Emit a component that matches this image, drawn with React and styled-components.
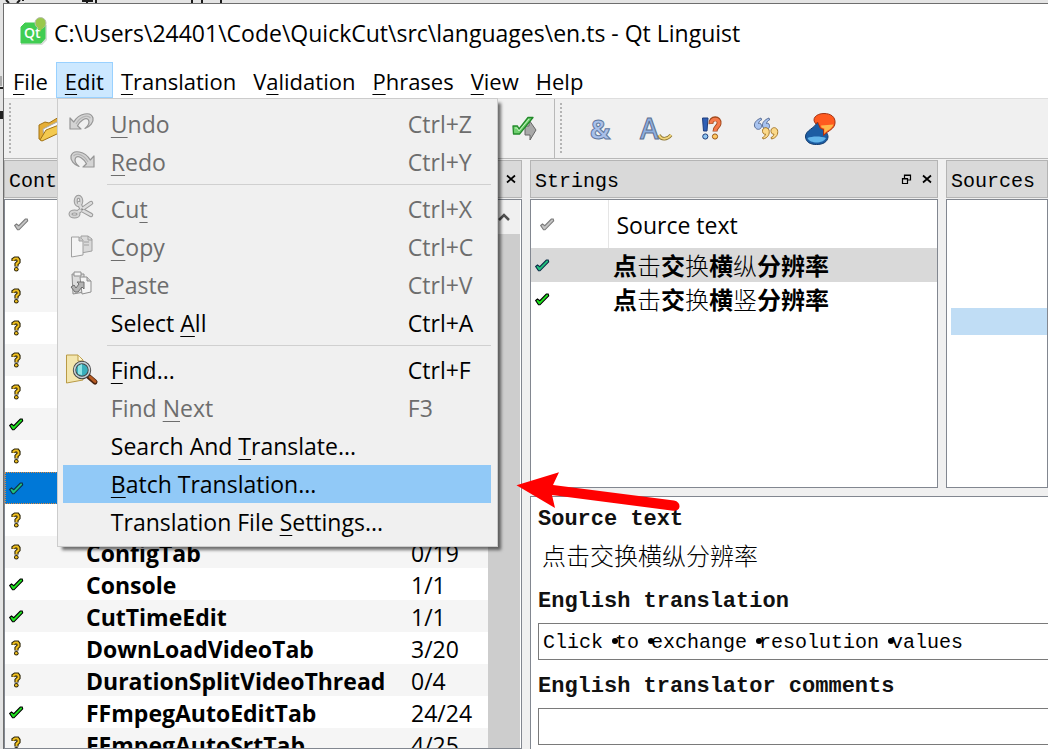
import React from "react";
import styled, { createGlobalStyle, css } from "styled-components";

const ui = '"Open Sans", "Noto Sans", sans-serif';
const mono = '"Liberation Mono", "Noto Sans CJK SC", monospace';
const cjk = '"Noto Sans CJK SC", sans-serif';

const GlobalStyle = createGlobalStyle`
  *, *::before, *::after { box-sizing: border-box; }
  body { margin: 0; font: 23px/32px ${ui}; color: #000; background: #e4e4e4; }
  button { font: inherit; color: inherit; background: none; border: 0; padding: 0; text-align: left; }
  table { border-collapse: collapse; border-spacing: 0; }
  svg { display: block; flex: none; overflow: visible; }
`;

const Desktop = styled.div`
  position: relative;
  height: 100vh;
  padding: 3px 0 0 3px;
  overflow: hidden;
`;
const Behind = styled.svg`
  position: absolute;
  left: 0;
  top: 0;
`;
const Window = styled.main`
  position: relative;
  height: 100%;
  display: flex;
  flex-direction: column;
  background: #f0f0f0;
  border: solid #6e6e6e;
  border-width: 1px 0 0 1px;
`;
const TitleBar = styled.header`
  display: flex;
  align-items: center;
  gap: 6px;
  height: 58px;
  flex: none;
  padding: 0 16px;
  background: #fff;
  white-space: nowrap;
`;
const MenuBar = styled.nav`
  display: flex;
  height: 37px;
  flex: none;
  background: #fff;
  border-bottom: 1px solid #dedede;
`;
const MenuSlot = styled.div`
  position: relative;
  margin-right: -1px;
`;
const MenuButton = styled.button`
  height: 36px;
  padding: 2px 8px 0;
  border: 1px solid ${(p) => (p.$open ? "#99d1ff" : "transparent")};
  background: ${(p) => (p.$open ? "#cce8ff" : "transparent")};
  font-size: 22px;
  white-space: nowrap;
`;
const Key = styled.span`
  text-decoration: underline;
  text-decoration-thickness: 1px;
  text-underline-offset: 4px;
`;
const Menu = styled.div`
  position: absolute;
  z-index: 2;
  top: 36px;
  left: 1px;
  width: 441px;
  padding: 6px 6px 5px 5px;
  background: #f0f0f0;
  border: 1px solid #ccc;
  box-shadow: 4px 4px 3px -1px rgba(0, 0, 0, 0.55);
`;
const MenuItem = styled.button`
  display: grid;
  grid-template-columns: 48px 1fr 83px;
  align-items: center;
  width: 100%;
  height: 38px;
  color: ${(p) => (p.disabled ? "#6d6d6d" : "#000")};
  background: ${(p) => (p.$active ? "#91c9f7" : "transparent")};
  white-space: nowrap;
`;
const MenuIcon = styled.span`
  padding-left: ${(p) => (p.$wide ? 2 : 5)}px;
`;
const Separator = styled.hr`
  height: 1px;
  margin: 3px 0 5px 44px;
  border: 0;
  background: #d0d0d0;
`;
const ToolRow = styled.div`
  display: flex;
  height: 60px;
  flex: none;
  border-bottom: 1px solid #b8b8b8;
`;
const Toolbar = styled.div`
  display: flex;
  align-items: center;
  padding: 0 15px 0 5px;
  ${(p) =>
    p.$main
      ? css`
          width: 551px;
          justify-content: space-between;
          border-right: 1px solid #b8b8b8;
        `
      : css`
          flex: 1;
          gap: 23px;
        `}
`;
const Grip = styled.span`
  width: 2px;
  height: 52px;
  background: repeating-linear-gradient(#b4b4b4 0 2px, transparent 2px 4px);
`;
const ToolButton = styled.button`
  width: 32px;
  height: 32px;
`;
const ToolGroup = styled.div`
  display: flex;
  flex: 1;
  justify-content: space-between;
  padding-left: 23px;
`;
const Workspace = styled.div`
  display: flex;
  gap: 8px;
  flex: 1;
  min-height: 0;
  padding-top: 1px;
`;
const Dock = styled.section`
  display: flex;
  flex-direction: column;
  gap: 1px;
  min-width: 0;
  min-height: 0;
  ${(p) => (p.$width ? `flex: 0 0 ${p.$width}px;` : "flex: 1;")}
`;
const DockTitle = styled.div`
  display: flex;
  align-items: center;
  justify-content: space-between;
  height: 38px;
  flex: none;
  padding: 2px 3px 0 4px;
  background: #d9d9d9;
  border: 1px solid #b4b4b4;
  font: 20px/32px ${mono};
  white-space: nowrap;
  overflow: hidden;
`;
const DockName = styled.span`
  padding-top: 3px;
`;
const DockButtons = styled.span`
  display: flex;
  gap: 7px;
`;
const DockButton = styled.button`
  padding-bottom: 3px;
`;
const Pane = styled.div`
  display: flex;
  flex: 1;
  min-height: 0;
  overflow: hidden;
  background: #fff;
  border: 1px solid #828790;
`;
const Right = styled.div`
  display: flex;
  flex-direction: column;
  flex: 1;
  gap: 8px;
  min-width: 0;
`;
const TopDocks = styled.div`
  display: flex;
  flex: none;
  gap: 8px;
  height: 328px;
`;
const Table = styled.table`
  flex: 1;
  align-self: flex-start;
  table-layout: fixed;
  width: 100%;
  th, td { padding: 0; text-align: left; white-space: nowrap; }
  th { font-weight: 400; height: 48px; }
`;
const HeadIcon = styled.th`
  svg { margin-left: 9px; }
`;
const HeadText = styled.th`
  border-left: 1px solid #e5e5e5;
`;
const HeadLabel = styled.div`
  padding: 2px 0 0 8px;
`;
const ContextRow = styled.tr`
  height: 32px;
  background: ${(p) => (p.$selected ? "#0078d7" : p.$alt ? "#f5f5f5" : "#fff")};
  outline: ${(p) => (p.$selected ? "1px dotted #e08a3c" : "none")};
  outline-offset: -1px;
  td { line-height: 30px; padding-top: 2px; }
  td:first-child { padding-top: 0; }
  svg { margin-left: 4px; }
`;
const Name = styled.td`
  font-weight: 700;
`;
const StringRow = styled.tr`
  height: 34px;
  background: ${(p) => (p.$selected ? "#d9d9d9" : "#fff")};
  svg { margin-left: 4px; }
`;
const StringText = styled.td`
  font: 24px/34px ${cjk};
`;
const StringLabel = styled.span`
  padding-left: 5px;
`;
const Heavy = styled.span`
  font-weight: 700;
`;
const Light = styled.span`
  font-weight: 300;
`;
const ScrollBar = styled.div`
  flex: none;
  width: 32px;
  margin-right: 1px;
  background: #cdcdcd;
`;
const ScrollUp = styled.button`
  display: grid;
  place-items: center;
  width: 32px;
  height: 34px;
  background: #f0f0f0;
`;
const SourceView = styled.div`
  flex: 1;
  padding: 108px 0 0 4px;
`;
const CurrentLine = styled.div`
  height: 27px;
  background: #c0ddf5;
`;
const Editor = styled.section`
  flex: 1;
  min-height: 0;
  padding: 8px 0 0 7px;
  background: #fff;
  border: solid #828790;
  border-width: 1px 0 0 1px;
`;
const Label = styled.label`
  display: block;
  padding-top: 2px;
  font: 700 22px/26px ${mono};
  color: #111;
`;
const SourceText = styled.p`
  margin: 4px 0 14px;
  padding-left: 4px;
  font: 300 24px/36px ${cjk};
`;
const Field = styled.div`
  position: relative;
  margin: 8px 0 12px;
`;
const Input = styled.input`
  display: block;
  width: 100%;
  height: 37px;
  padding: 2px 4px 0;
  border: 1px solid #7a7a7a;
  border-right: 0;
  border-radius: 0;
  outline: 0;
  background: #fff;
  font: 20px/32px ${mono};
`;
const SpaceMarks = styled.svg`
  position: absolute;
  left: 5px;
  top: 0;
  pointer-events: none;
`;
const Pointer = styled.svg`
  position: absolute;
  z-index: 3;
  left: 512px;
  top: 468px;
`;

const checkColors = {
  done: ["#1fe31f", "#000"],
  selected: ["#1fc07c", "#0c2f48"],
  off: ["#c4c4c4", "#7c7c7c"],
};
const Check = ({ kind = "done" }) => (
  <svg width="15" height="13" viewBox="0 0 15 13">
    <path d="M.7 7.500 2.500 6 4.800 7.700 11.300 1H13.200L13.700 2.800 5 11.800H3.500Z" fill={checkColors[kind][0]} stroke={checkColors[kind][1]} strokeWidth="1.100" />
  </svg>
);
const Question = () => (
  <svg width="15" height="16" viewBox="0 0 15 16" fill="none">
    <path d="M4.5 5V3.5L6 2.5H8.5L9.5 4V6L7.5 8V10.5" stroke="#2b2306" strokeWidth="4.2" />
    <circle cx="7.3" cy="13.3" r="2.3" fill="#2b2306" />
    <path d="M4.5 4.8V3.5L6 2.5H8.5L9.5 4V6L7.5 8V10" stroke="#f0c020" strokeWidth="2" />
    <circle cx="7.3" cy="13.2" r="1.3" fill="#f0c020" />
  </svg>
);
const QtLogo = () => (
  <svg width="28" height="28" viewBox="0 0 28 28">
    <path d="M5 6H27V21L22 26H1V10Z" fill="#b9c4bb" opacity=".6" />
    <path d="M5 4H25V19.500L21 24H1V8Z" fill="#41cd52" stroke="#41cd52" strokeLinejoin="round" />
    <text x="4" y="19" fill="#fff" fontFamily="Open Sans" fontWeight="600" fontSize="14">Qt</text>
    <circle cx="20.500" cy="4" r="5.500" fill="#99c84a" stroke="#b7bfae" />
    <path d="M17 7 20 12 25 7Z" fill="#99c84a" />
  </svg>
);
const Undo = ({ flip }) => (
  <svg width="28" height="28" viewBox="0 0 28 28">
    <g transform={flip ? "translate(28 0) scale(-1 1)" : undefined} fill="#d4d4d4" stroke="#969696" strokeWidth="1.2" strokeLinejoin="round">
      <path d="M2 8 2 19 13 19 9.500 15.800C11 12 18 6 20.500 10C22 13 20 16 17 18.500C22 17 26 12 25 8C23 1 11 3 5.800 12Z" />
      <path d="M8 14C12 7 19 4 22.500 8" fill="none" stroke="#b5b5b5" />
    </g>
  </svg>
);
const Cut = () => (
  <svg width="28" height="28" viewBox="0 0 28 28" fill="none" stroke="#999" strokeLinecap="round">
    <path d="M11 8 14 15 23 20M23 8 10 17" strokeWidth="4.500" />
    <ellipse cx="10.500" cy="6" rx="2.800" ry="4.200" strokeWidth="4" />
    <ellipse cx="6.500" cy="19" rx="4" ry="2.600" strokeWidth="4" />
    <path d="M11 8 14 15 23 20M23 8 10 17" strokeWidth="2.500" stroke="#ddd" />
    <ellipse cx="10.500" cy="6" rx="2.800" ry="4.200" strokeWidth="2" stroke="#d4d4d4" />
    <ellipse cx="6.500" cy="19" rx="4" ry="2.600" strokeWidth="2" stroke="#d4d4d4" />
    <circle cx="14" cy="14.500" r=".8" stroke="#888" />
  </svg>
);
const Copy = () => (
  <svg width="28" height="28" viewBox="0 0 28 28" fill="#ebebeb" stroke="#a0a0a0">
    <path d="M13 3H20L24 6V18L13 20Z" fill="#dadada" />
    <path d="M20 3V7H24M16 9H21M16 12H21" fill="none" />
    <path d="M3.500 4H11L15 7V22L3.500 24Z" fill="#f4f4f4" />
    <path d="M11 4V8H15" fill="#ccc" />
  </svg>
);
const Paste = () => (
  <svg width="28" height="28" viewBox="0 0 28 28" fill="#ddd" stroke="#8e8e8e">
    <path d="M4 3H16V21L5 23Z" />
    <path d="M6 1H13V5H6Z" fill="#f4f4f4" />
    <path d="M12 6H19L23 10V21L14 23Z" fill="#f4f4f4" />
    <path d="M19 6V10H23" fill="#ccc" />
    <path d="M3 16 6 14 8 17 11 13 9 11H16V18L14 16 10 21H7Z" fill="#b4b4b4" stroke="#6e6e6e" />
  </svg>
);
const Find = () => (
  <svg width="34" height="32" viewBox="0 0 34 32">
    <path d="M1.500 1H13L18 6V26L1.500 29Z" fill="#f3e6ae" stroke="#b99a45" />
    <path d="M13 1V7H18" fill="#fff7d4" stroke="#b99a45" />
    <path d="M23 22 30 28" stroke="#4c2410" strokeWidth="5" strokeLinecap="round" />
    <path d="M25 23 30 27.500" stroke="#b65b23" strokeWidth="3" strokeLinecap="round" />
    <circle cx="17" cy="16" r="7.500" fill="#39aebb" stroke="#444" strokeWidth="3.400" />
    <circle cx="17" cy="16" r="7.500" fill="none" stroke="#c5d3d8" strokeWidth="1.600" />
    <path d="M13 20V12L17 10V21Z" fill="#8ce3e3" />
  </svg>
);
const Folder = () => (
  <svg width="32" height="32" viewBox="0 0 32 32" stroke="#a37313">
    <path d="M5 12 11 9 15 10 25 4 29 6V14L8 27 5 26Z" fill="#e5ae37" />
    <path d="M9 16 27 7V13L10 25Z" fill="#fafafa" stroke="#aaa" />
    <path d="M6 27 12 17 30 10 25 20 8 28Z" fill="#f3c94f" />
  </svg>
);
const DoneNext = () => (
  <svg width="32" height="32" viewBox="0 0 32 32" strokeLinejoin="round">
    <path d="M22 7 29 17 23 27V22H18V13H22Z" fill="#a9a9a9" stroke="#666" />
    <path d="M6 13H10.500L12 16 21 4.500H26L12.500 21H6.500Z" fill="#6fd06f" stroke="#238a2b" strokeWidth="1.300" />
    <path d="M8 15H10L12 18 22 6" fill="none" stroke="#c5f3c0" />
  </svg>
);
const Ampersand = () => (
  <svg width="32" height="32" viewBox="0 0 32 32">
    <text x="5" y="26" fontFamily="Open Sans" fontWeight="700" fontSize="27" fill="#a9c0ea" stroke="#5f789f">&amp;</text>
  </svg>
);
const Accel = () => (
  <svg width="32" height="32" viewBox="0 0 32 32">
    <text x="0" y="26" fontFamily="Open Sans" fontWeight="600" fontSize="28" fill="#8fb0e0" stroke="#5d6f90">A</text>
    <path d="M19 22C21 27 27 27 31 22" fill="none" stroke="#8b7430" strokeWidth="3.500" />
    <path d="M19 22C21 27 27 27 31 22" fill="none" stroke="#f2d57c" strokeWidth="2" />
  </svg>
);
const Punct = () => (
  <svg width="32" height="32" viewBox="0 0 32 32">
    <path d="M7.500 5H13L12 18H8.500Z" fill="#2f5fb5" stroke="#1e3d7c" />
    <circle cx="10.300" cy="23.500" r="2.600" fill="#8ec4f0" stroke="#1e3d7c" />
    <path d="M16 11C15.500 4 25 4 24 10.500C23.500 14 20 14 20 18.500" fill="none" stroke="#a24a1d" strokeWidth="5" />
    <path d="M16 10.500C15.500 5 25 5 24 10.500C23.500 14 20 14 20 18" fill="none" stroke="#f5794a" strokeWidth="3.200" />
    <circle cx="20" cy="23.500" r="2.600" fill="#ffc862" stroke="#9a5a17" />
  </svg>
);
const Quotes = () => (
  <svg width="32" height="32" viewBox="0 0 32 32">
    <g fill="#a8c3ef" stroke="#5a6f98">
      <path d="M11 5C6 7 4 10 4.500 13C6 18 12 17 11.500 12.500C11 10 9.500 10 8.500 10.500C8.500 9 10 7.500 11.500 7Z" />
      <path d="M19 5C14 7 12 10 12.500 13C14 18 20 17 19.500 12.500C19 10 17.500 10 16.500 10.500C16.500 9 18 7.500 19.500 7Z" />
    </g>
    <g fill="#fbd98a" stroke="#a87a2b">
      <path d="M13 26C18 25 20 21 19 17C17 13 12 14.500 12.500 18.500C13 21 14.500 21.500 15.500 21C15 23 14 24 12.500 24.500Z" />
      <path d="M21.500 26C26.500 25 28.500 21 27.500 17C25.500 13 20.500 14.500 21 18.500C21.500 21 23 21.500 24 21C23.500 23 22.500 24 21 24.500Z" />
    </g>
  </svg>
);
const Placeholders = () => (
  <svg width="32" height="32" viewBox="0 0 32 32" strokeLinejoin="round">
    <path d="M12 9C11 15 0 17 .5 24C1 29 5 31.500 11.500 31.500C18 31.500 22.500 29 23 24C23 20 20 18 17 15Z" fill="#1c5da3" stroke="#123a6b" />
    <path d="M2.500 25C5 31 18 31 21 25C16 23 7 23 2.500 25Z" fill="#62b5ea" />
    <path d="M11 11C6 6 11 .5 19 .5C26 .5 30.500 4 30 10C29.500 16 24 17 18.500 22.500V16.500L15.500 15.500 12.500 9Z" fill="#ff5a1f" stroke="#a33313" />
    <path d="M16 12.500 28.500 11.500C27 16 22.500 17 19.300 20.500V15.500L16.500 14.500Z" fill="#ffb84a" />
  </svg>
);
const Close = () => (
  <svg width="14" height="14" viewBox="0 0 14 14">
    <path d="M3 3.500 11 10.500M11 3.500 3 10.500" stroke="#000" strokeWidth="1.700" />
  </svg>
);
const Float = () => (
  <svg width="14" height="14" viewBox="0 0 14 14" fill="none" stroke="#000">
    <path d="M5.500 6V3H11.500V8H8.500M5 3.500H12M3.500 6.500H8.500V11.500H3.500ZM3 7H9" strokeWidth="1.200" />
  </svg>
);

const menuIcons = { undo: <Undo />, redo: <Undo flip />, cut: <Cut />, copy: <Copy />, paste: <Paste />, find: <Find /> };
const editMenu = [
  ["undo", "_Undo", "Ctrl+Z", "off"],
  ["redo", "_Redo", "Ctrl+Y", "off"],
  null,
  ["cut", "Cu_t", "Ctrl+X", "off"],
  ["copy", "_Copy", "Ctrl+C", "off"],
  ["paste", "_Paste", "Ctrl+V", "off"],
  ["", "Select _All", "Ctrl+A"],
  null,
  ["find", "_Find...", "Ctrl+F"],
  ["", "Find _Next", "F3", "off"],
  ["", "Search And _Translate..."],
  ["", "_Batch Translation...", "", "active"],
  ["", "Translation File _Settings..."],
];
const contexts = [
  ["?"], ["?"], ["?"], ["?"], ["?"], ["done"], ["?"], ["selected"], ["?"],
  ["?", "ConfigTab", "0/19"],
  ["done", "Console", "1/1"],
  ["done", "CutTimeEdit", "1/1"],
  ["?", "DownLoadVideoTab", "3/20"],
  ["?", "DurationSplitVideoThread", "0/4"],
  ["done", "FFmpegAutoEditTab", "24/24"],
  ["?", "FFmpegAutoSrtTab", "4/25"],
];
const thin = "击换纵竖";
const translation = "Click to exchange resolution values";

function Mnemonic({ text }) {
  const i = text.indexOf("_");
  return (
    <span>
      {text.slice(0, i)}
      <Key>{text[i + 1]}</Key>
      {text.slice(i + 2)}
    </span>
  );
}

function EditMenu() {
  return (
    <Menu role="menu">
      {editMenu.map((item, i) =>
        item ? (
          <MenuItem key={i} role="menuitem" disabled={item[3] === "off"} $active={item[3] === "active"}>
            <MenuIcon $wide={item[0] === "find"}>{menuIcons[item[0]]}</MenuIcon>
            <Mnemonic text={item[1]} />
            <span>{item[2]}</span>
          </MenuItem>
        ) : (
          <Separator key={i} />
        )
      )}
    </Menu>
  );
}

function MixedText({ text }) {
  return (
    <StringLabel>
      {[...text].map((c, i) => (thin.includes(c) ? <Light key={i}>{c}</Light> : <Heavy key={i}>{c}</Heavy>))}
    </StringLabel>
  );
}

export default function App() {
  return (
    <Desktop>
      <GlobalStyle />
      <Behind width="240" height="130" viewBox="0 0 240 130" aria-hidden="true">
        <path d="M6 0 9 3M20 0 17 3M22 0H24M82 1H93M87 0V3M96 0V3M192 0V3M202 0V3M221 0V3" stroke="#1a1a1a" strokeWidth="2" />
        <path d="M0 76H2V86H0Z" fill="#aaa" />
        <path d="M0 87H3V89H0ZM0 111H4V119H0Z" fill="#222" />
      </Behind>
      <Window>
        <TitleBar>
          <QtLogo />
          <span>C:\Users\24401\Code\QuickCut\src\languages\en.ts - Qt Linguist</span>
        </TitleBar>
        <MenuBar>
          {["_File", "_Edit", "_Translation", "V_alidation", "_Phrases", "_View", "_Help"].map((name) => (
            <MenuSlot key={name}>
              <MenuButton $open={name === "_Edit"}>
                <Mnemonic text={name} />
              </MenuButton>
              {name === "_Edit" && <EditMenu />}
            </MenuSlot>
          ))}
        </MenuBar>
        <ToolRow>
          <Toolbar $main>
            <Grip />
            <ToolGroup>
              <ToolButton aria-label="Open"><Folder /></ToolButton>
              <ToolButton aria-label="Done and next"><DoneNext /></ToolButton>
            </ToolGroup>
          </Toolbar>
          <Toolbar>
            <Grip />
            <ToolButton aria-label="Accelerators"><Ampersand /></ToolButton>
            <ToolButton aria-label="Surrounding whitespace"><Accel /></ToolButton>
            <ToolButton aria-label="Ending punctuation"><Punct /></ToolButton>
            <ToolButton aria-label="Phrase matches"><Quotes /></ToolButton>
            <ToolButton aria-label="Place markers"><Placeholders /></ToolButton>
          </Toolbar>
        </ToolRow>
        <Workspace>
          <Dock $width={518}>
            <DockTitle>
              <DockName>Context</DockName>
              <DockButton aria-label="Close"><Close /></DockButton>
            </DockTitle>
            <Pane>
              <Table>
                <colgroup>
                  <col style={{ width: 81 }} />
                  <col />
                  <col style={{ width: 77 }} />
                </colgroup>
                <thead>
                  <tr><HeadIcon><Check kind="off" /></HeadIcon><th /><th /></tr>
                </thead>
                <tbody>
                  {contexts.map(([state, name, items], i) => (
                    <ContextRow key={i} $alt={i % 2 === 1} $selected={state === "selected"}>
                      <td>{state === "?" ? <Question /> : <Check kind={state} />}</td>
                      <Name>{name}</Name>
                      <td>{items}</td>
                    </ContextRow>
                  ))}
                </tbody>
              </Table>
              <ScrollBar>
                <ScrollUp aria-label="Scroll up">
                  <svg width="12" height="10" viewBox="0 0 12 10"><path d="M1 8 6 3 11 8" fill="none" stroke="#505050" strokeWidth="2.500" /></svg>
                </ScrollUp>
              </ScrollBar>
            </Pane>
          </Dock>
          <Right>
            <TopDocks>
              <Dock $width={408}>
                <DockTitle>
                  <DockName>Strings</DockName>
                  <DockButtons>
                    <DockButton aria-label="Float"><Float /></DockButton>
                    <DockButton aria-label="Close"><Close /></DockButton>
                  </DockButtons>
                </DockTitle>
                <Pane>
                  <Table>
                    <colgroup>
                      <col style={{ width: 77 }} />
                      <col />
                    </colgroup>
                    <thead>
                      <tr><HeadIcon><Check kind="off" /></HeadIcon><HeadText><HeadLabel>Source text</HeadLabel></HeadText></tr>
                    </thead>
                    <tbody>
                      <StringRow $selected><td><Check kind="selected" /></td><StringText><MixedText text="点击交换横纵分辨率" /></StringText></StringRow>
                      <StringRow><td><Check /></td><StringText><MixedText text="点击交换横竖分辨率" /></StringText></StringRow>
                    </tbody>
                  </Table>
                </Pane>
              </Dock>
              <Dock>
                <DockTitle><DockName>Sources and Forms</DockName></DockTitle>
                <Pane>
                  <SourceView><CurrentLine /></SourceView>
                </Pane>
              </Dock>
            </TopDocks>
            <Editor>
              <Label as="div">Source text</Label>
              <SourceText>点击交换横纵分辨率</SourceText>
              <Label htmlFor="translation">English translation</Label>
              <Field>
                <Input id="translation" defaultValue={translation} />
                <SpaceMarks width="440" height="37" viewBox="0 0 440 37" aria-hidden="true">
                  {[...translation].map((c, i) => c === " " && <circle key={i} cx={i * 12 + 12} cy="18" r="3" />)}
                </SpaceMarks>
              </Field>
              <Label htmlFor="comments">English translator comments</Label>
              <Field>
                <Input id="comments" />
              </Field>
            </Editor>
          </Right>
        </Workspace>
        <Pointer width="172" height="48" viewBox="0 0 172 48" aria-hidden="true">
          <path d="M.5 13.300 43 .3 37 13 158 28.500C166 30 165 40 157 38.700L36 23 39 36Z" fill="#f00" />
        </Pointer>
      </Window>
    </Desktop>
  );
}
